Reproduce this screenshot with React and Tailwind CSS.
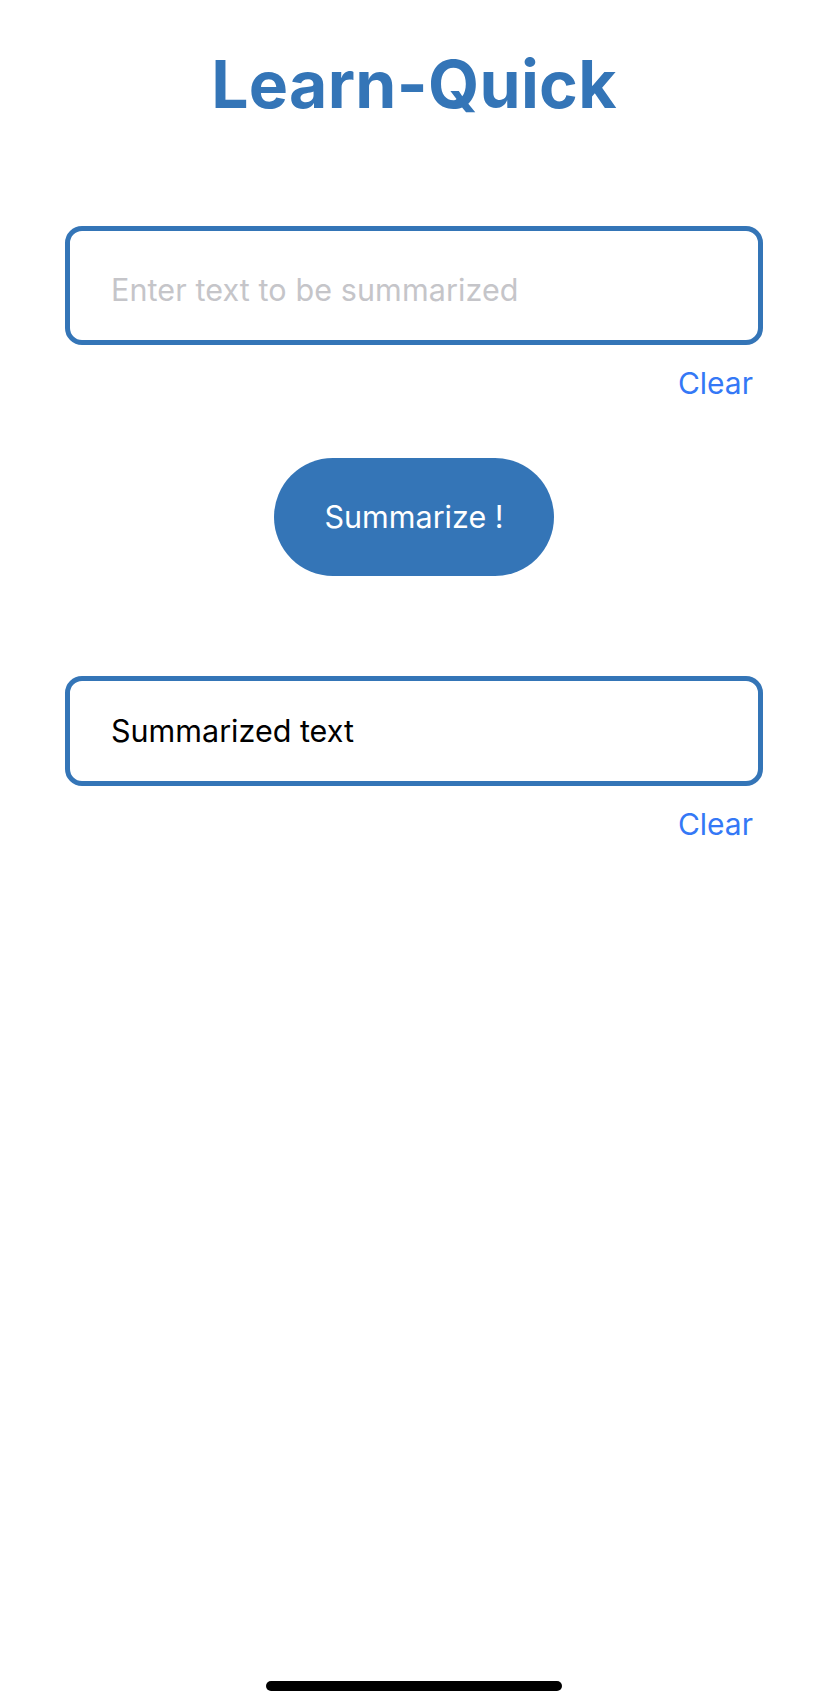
import React from 'react';

const font = { fontFamily: 'Inter, "Noto Sans", sans-serif' };

function TextBox({ children, height, muted, shift }) {
    return (
        <div className="flex flex-col">
            <div className={`flex items-center border-[5px] border-[#3475b7] rounded-[17px] pl-[41px] ${height} ${shift}`}>
                <span className={`text-[30.5px] leading-none ${muted ? 'text-[#c5c5c9] tracking-[0.1px]' : 'text-black'}`}>{children}</span>
            </div>
            <div className="flex justify-end pr-[10px] mt-[20px]">
                <button className="text-[30px] leading-[36px] text-[#3478f6]">Clear</button>
            </div>
        </div>
    );
}

export default function App() {
    return (
        <div className="min-h-[1707px] w-full bg-white flex flex-col px-[65px]" style={font}>
            <h1 className="mt-[51px] text-center text-[66px] leading-none font-bold text-[#3475b7] tracking-[0.3px]">
                Learn-Quick
            </h1>

            <div className="mt-[109px]">
                <TextBox height="h-[119px]" shift="pt-[9px]" muted>Enter text to be summarized</TextBox>
            </div>

            <div className="flex justify-center mt-[57px]">
                <button className="w-[280px] h-[118px] rounded-full bg-[#3475b7] text-white text-[30.5px] flex items-center justify-center">
                    Summarize !
                </button>
            </div>

            <div className="mt-[100px]">
                <TextBox height="h-[110px]" shift="pt-0">Summarized text</TextBox>
            </div>

            <div className="mt-auto flex justify-center pb-[16px]">
                <div className="w-[296px] h-[10px] rounded-full bg-black" />
            </div>
        </div>
    );
}
